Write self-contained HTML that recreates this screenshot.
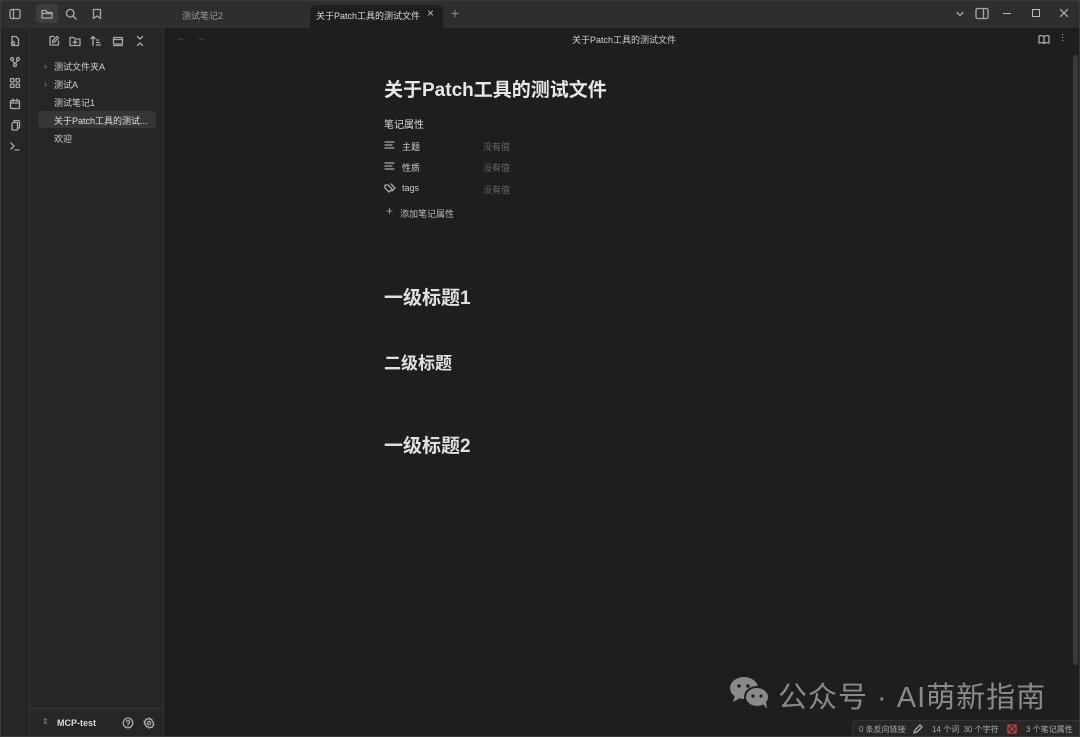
<!DOCTYPE html>
<html><head><meta charset="utf-8"><style>
*{margin:0;padding:0;box-sizing:border-box}
body{width:1080px;height:737px;background:#1e1e1e;font-family:"Liberation Sans","Noto Sans CJK SC",sans-serif;color:#dadada;position:relative;overflow:hidden;font-size:9px}
.a{position:absolute}
svg{position:absolute;fill:none;stroke:#a8a8a8;stroke-width:1.3;stroke-linecap:round;stroke-linejoin:round}
</style></head><body>
<div class="a" style="left:0;top:0;width:1080px;height:737px;border:1px solid #3a3a3a;z-index:9;pointer-events:none"></div>
<div class="a" style="left:0;top:0;width:1080px;height:28px;background:#2e2e2e"></div>
<div class="a" style="left:36px;top:4px;width:22px;height:19px;background:#3d3d3d;border-radius:4px"></div>
<svg style="left:9px;top:8px" width="12" height="12" viewBox="0 0 12 12"><rect x="1" y="1.5" width="10" height="9" rx="1.5"/><path d="M4.5 1.5v9"/></svg>
<svg style="left:41px;top:8px" width="12" height="12" viewBox="0 0 12 12"><path d="M1 3.5V10h10V4.5H6L5 2.5H1z M1 5.5h10"/></svg>
<svg style="left:65px;top:8px" width="12" height="12" viewBox="0 0 12 12"><circle cx="5.2" cy="5.2" r="3.8"/><path d="M8 8l3 3"/></svg>
<svg style="left:91px;top:8px" width="12" height="12" viewBox="0 0 12 12"><path d="M2.5 1.5h7v9L6 8 2.5 10.5z"/></svg>
<div class="a" style="left:182px;top:9px;color:#9a9a9a;font-size:9px">测试笔记2</div>
<div class="a" style="left:310px;top:5px;width:133px;height:23px;background:#1e1e1e;border-radius:6px 6px 0 0"></div>
<div class="a" style="left:316px;top:9px;color:#dadada;font-size:9px">关于Patch工具的测试文件</div>
<div class="a" style="left:427px;top:6px;color:#bbb;font-size:12px">×</div>
<div class="a" style="left:451px;top:5px;color:#888;font-size:14px">+</div>
<svg style="left:955px;top:9px" width="10" height="10" viewBox="0 0 10 10"><path d="M2 3.5l3 3 3-3"/></svg>
<svg style="left:975px;top:7px" width="14" height="13" viewBox="0 0 14 13"><rect x="1" y="1.5" width="12" height="10" rx="1.5"/><path d="M8.5 1.5v10"/></svg>
<div class="a" style="left:1003px;top:13px;width:8px;height:1px;background:#bbb"></div>
<div class="a" style="left:1032px;top:9px;width:8px;height:8px;border:1.2px solid #bbb"></div>
<svg style="left:1059px;top:8px" width="10" height="10" viewBox="0 0 10 10"><path d="M1.5 1.5l7 7M8.5 1.5l-7 7"/></svg>
<div class="a" style="left:0;top:28px;width:30px;height:709px;background:#262626;border-right:1px solid #333"></div>
<svg style="left:9px;top:35px" width="12" height="12" viewBox="0 0 12 12"><path d="M3 1.5h4l2.5 2.5v6.5h-6.5z"/><circle cx="4" cy="8" r="1.5"/></svg>
<svg style="left:9px;top:56px" width="12" height="12" viewBox="0 0 12 12"><circle cx="3" cy="3" r="1.5"/><circle cx="9" cy="3" r="1.5"/><circle cx="6" cy="9" r="1.5"/><path d="M3.5 4.5L5.5 7.5M8.5 4.5L6.5 7.5"/></svg>
<svg style="left:9px;top:77px" width="12" height="12" viewBox="0 0 12 12"><rect x="1.5" y="1.5" width="3.5" height="3.5" rx="1"/><rect x="7" y="1.5" width="3.5" height="3.5" rx="1"/><rect x="1.5" y="7" width="3.5" height="3.5" rx="1"/><rect x="7" y="7" width="3.5" height="3.5" rx="1"/></svg>
<svg style="left:9px;top:98px" width="12" height="12" viewBox="0 0 12 12"><rect x="1.5" y="2.5" width="9" height="8" rx="1"/><path d="M1.5 5h9M4 1v2.5M8 1v2.5"/></svg>
<svg style="left:9px;top:119px" width="12" height="12" viewBox="0 0 12 12"><path d="M4 3.5h4.5v7.5H3V5z M5 3.5V1.5h4.5l1 1v6.5H8.5"/></svg>
<svg style="left:9px;top:140px" width="12" height="12" viewBox="0 0 12 12"><path d="M2 3l3 3-3 3M6 10h4"/></svg>
<div class="a" style="left:30px;top:28px;width:134px;height:709px;background:#262626;border-right:1px solid #333"></div>
<svg style="left:48px;top:35px" width="12" height="12" viewBox="0 0 12 12"><path d="M6 1.5H2v8.5h8.5V6M9 1.5l1.5 1.5L6 7.5H4.5V6z"/></svg>
<svg style="left:69px;top:35px" width="12" height="12" viewBox="0 0 12 12"><path d="M1 2.5h4l1 1.5h5v6.5H1z M6 5.5v3.5M4.3 7.2h3.4"/></svg>
<svg style="left:90px;top:35px" width="12" height="12" viewBox="0 0 12 12"><path d="M3 10.5V1.5M1 3.5l2-2 2 2M6.5 5h2M6.5 7.5h3M6.5 10h4"/></svg>
<svg style="left:112px;top:35px" width="12" height="12" viewBox="0 0 12 12"><rect x="1.5" y="2.5" width="9" height="6.5" rx="1"/><path d="M1.5 10.5h9M1.5 4.5h9"/></svg>
<svg style="left:134px;top:35px" width="12" height="12" viewBox="0 0 12 12"><path d="M3.5 1.5L6 4l2.5-2.5M3.5 10.5L6 8l2.5 2.5"/></svg>
<div class="a" style="left:44px;top:61px;color:#888;font-size:9px">›</div>
<div class="a" style="left:54px;top:60px;font-size:9px;color:#cfcfcf">测试文件夹A</div>
<div class="a" style="left:44px;top:79px;color:#888;font-size:9px">›</div>
<div class="a" style="left:54px;top:78px;font-size:9px;color:#cfcfcf">测试A</div>
<div class="a" style="left:54px;top:96px;font-size:9px;color:#cfcfcf">测试笔记1</div>
<div class="a" style="left:38px;top:111px;width:118px;height:17px;background:#363636;border-radius:4px"></div>
<div class="a" style="left:54px;top:114px;font-size:9px;color:#e0e0e0">关于Patch工具的测试...</div>
<div class="a" style="left:54px;top:132px;font-size:9px;color:#cfcfcf">欢迎</div>
<div class="a" style="left:30px;top:708px;width:133px;height:1px;background:#333"></div>
<div class="a" style="left:42px;top:717px;color:#888;font-size:8px">⇕</div>
<div class="a" style="left:57px;top:718px;font-size:9px;font-weight:bold;color:#dadada">MCP-test</div>
<svg style="left:122px;top:717px" width="12" height="12" viewBox="0 0 12 12"><circle cx="6" cy="6" r="4.8"/><path d="M4.6 4.8a1.5 1.5 0 1 1 1.4 1.7v.8M6 8.8v.1"/></svg>
<svg style="left:143px;top:717px" width="12" height="12" viewBox="0 0 12 12"><circle cx="6" cy="6" r="1.6"/><path d="M6 1l1 1.5 1.7-.3.3 1.7L10.5 5 10 6.5l1 1.5-1.5.8-.3 1.7-1.7-.3L6 11l-1-1.5-1.7.3-.3-1.7L1.5 7.2 2 6 1 4.5l1.5-.8.3-1.7 1.7.3z"/></svg>
<div class="a" style="left:177px;top:33px;color:#555;font-size:10px">←&nbsp;&nbsp;&nbsp;→</div>
<div class="a" style="left:572px;top:33px;font-size:9px;color:#cfcfcf">关于Patch工具的测试文件</div>
<svg style="left:1038px;top:34px" width="12" height="11" viewBox="0 0 12 11"><path d="M6 2.5C4.5 1.5 2.5 1.5 1 2v7c1.5-.5 3.5-.5 5 .5 1.5-1 3.5-1 5-.5V2c-1.5-.5-3.5-.5-5 .5zM6 2.5v7"/></svg>
<div class="a" style="left:1061px;top:33px;color:#aaa;font-size:10px;line-height:3px">·<br>·<br>·</div>
<div class="a" style="left:384px;top:75px;font-size:19px;font-weight:bold;color:#e8e8e8">关于Patch工具的测试文件</div>
<div class="a" style="left:384px;top:116px;font-size:10px;color:#dadada">笔记属性</div>
<svg style="left:384px;top:140px" width="12" height="10" viewBox="0 0 12 10"><path d="M1 2h9M1 5h7M1 8h9"/></svg>
<div class="a" style="left:402px;top:140px;font-size:9px;color:#cfcfcf">主题</div>
<div class="a" style="left:483px;top:140px;font-size:9px;color:#666">没有值</div>
<svg style="left:384px;top:161px" width="12" height="10" viewBox="0 0 12 10"><path d="M1 2h9M1 5h7M1 8h9"/></svg>
<div class="a" style="left:402px;top:161px;font-size:9px;color:#cfcfcf">性质</div>
<div class="a" style="left:483px;top:161px;font-size:9px;color:#666">没有值</div>
<svg style="left:384px;top:183px" width="13" height="10" viewBox="0 0 13 10"><path d="M1 2v3l4 4 3-3-4-4z M7 1l4 4-3 3"/></svg>
<div class="a" style="left:402px;top:183px;font-size:9px;color:#cfcfcf">tags</div>
<div class="a" style="left:483px;top:183px;font-size:9px;color:#666">没有值</div>
<div class="a" style="left:386px;top:204px;font-size:12px;color:#aaa">+</div>
<div class="a" style="left:400px;top:207px;font-size:9px;color:#bbb">添加笔记属性</div>
<div class="a" style="left:384px;top:283px;font-size:19px;font-weight:bold;color:#e0e0e0">一级标题1</div>
<div class="a" style="left:384px;top:349px;font-size:17px;font-weight:bold;color:#e0e0e0">二级标题</div>
<div class="a" style="left:384px;top:431px;font-size:19px;font-weight:bold;color:#e0e0e0">一级标题2</div>
<div class="a" style="left:1073px;top:55px;width:5px;height:610px;background:#3a3a3a;border-radius:3px"></div>
<svg style="left:729px;top:675px;fill:#8a8a8a;stroke:none" width="42" height="36" viewBox="0 0 42 36"><ellipse cx="15" cy="13" rx="14" ry="11"/><path d="M6 20l-2 7 7-4z"/><ellipse cx="28" cy="22" rx="12" ry="10" stroke="#1e1e1e" stroke-width="2"/><path d="M34 29l4 5-1-7z"/><circle cx="10" cy="11" r="1.8" fill="#1e1e1e"/><circle cx="19" cy="11" r="1.8" fill="#1e1e1e"/><circle cx="24" cy="21" r="1.6" fill="#1e1e1e"/><circle cx="32" cy="21" r="1.6" fill="#1e1e1e"/></svg>
<div class="a" style="left:778px;top:674px;font-size:29px;color:#8a8a8a;letter-spacing:1px">公众号 · AI萌新指南</div>
<div class="a" style="left:852px;top:720px;width:228px;height:17px;background:#262626;border-top:1px solid #333;border-left:1px solid #333;border-radius:4px 0 0 0"></div>
<div class="a" style="left:859px;top:724px;font-size:8px;color:#aaa">0 条反向链接</div>
<svg style="left:913px;top:724px" width="10" height="10" viewBox="0 0 10 10"><path d="M1 9l1-3 5-5 2 2-5 5z"/></svg>
<div class="a" style="left:932px;top:724px;font-size:8px;color:#aaa">14 个词&nbsp;&nbsp;30 个字符</div>
<svg style="left:1007px;top:724px;stroke:#c04040" width="10" height="10" viewBox="0 0 10 10"><path d="M1 1l8 8M9 1L1 9M1 1h8v8H1z"/></svg>
<div class="a" style="left:1026px;top:724px;font-size:8px;color:#aaa">3 个笔记属性</div>
</body></html>
